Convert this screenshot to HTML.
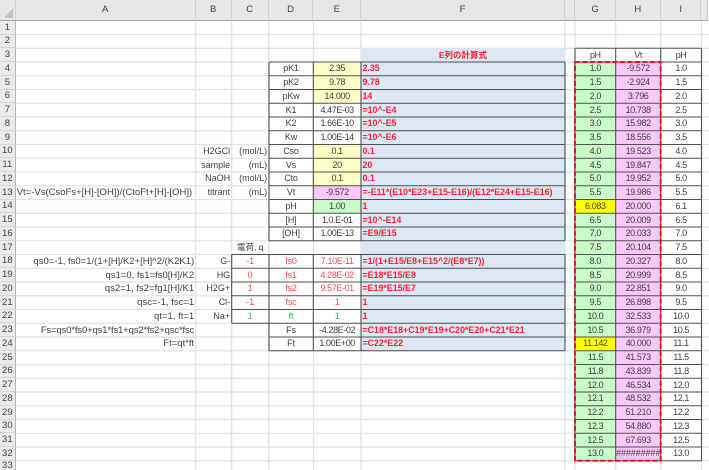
<!DOCTYPE html>
<html><head><meta charset="utf-8">
<style>
html,body{margin:0;padding:0;background:#fff;}
#w{position:relative;width:709px;height:470px;overflow:hidden;background:#fff;filter:blur(.35px);
font-family:"Liberation Sans","Noto Sans CJK JP",sans-serif;font-size:9.5px;color:#3e3e3e;}
#grid{position:absolute;left:0;top:0;display:grid;
grid-template-columns:15.7px 180px 36px 37px 44.6px 47.7px 204px 10px 40.7px 45px 40.8px 7px;
grid-template-rows:20.75px repeat(32,13.75px) 10px;width:709px;height:470px;}
#grid>u{display:contents;text-decoration:none}
#grid>u>*{grid-row:var(--r);box-sizing:border-box;display:flex;align-items:center;justify-content:center;white-space:nowrap;line-height:13px;min-width:0;}
.bg{position:absolute;}
.h{background:#e6e6e6;color:#444;font-size:9.5px;grid-row:1!important;border-right:1px solid #cfcfcf;border-bottom:1px solid #a8a8a8;}
.n{grid-column:1;background:#ebebeb;color:#444;border-right:1px solid #b5b5b5;border-bottom:1px solid #d6d6d6;font-size:9.5px;}
.A{grid-column:2}.B{grid-column:3;font-size:9px}.C{grid-column:4;font-size:9px}.D{grid-column:5;font-size:9px;letter-spacing:-.2px}.E{grid-column:6;font-size:9px;letter-spacing:-.4px}.F{grid-column:7}.G{grid-column:9;font-size:9px;letter-spacing:-.4px}.H{grid-column:10;font-size:9px;letter-spacing:-.4px}.I{grid-column:11;font-size:9px;letter-spacing:-.4px}
.r{justify-content:flex-end!important;padding-right:1.5px;overflow:visible}
.l{justify-content:flex-start!important;padding-left:1px;}
.b{background:#fff}
.y{background:#ffffc8}.p{background:#fdc8fd}.g{background:#c8fcc8}.Y{background:#ff0;color:#444}
.f{background:#dce9f5;color:#ff2030;font-weight:bold;font-size:8.85px;justify-content:flex-start!important;padding-left:1.5px;overflow:hidden}
.R{color:#ff4a50}.T{color:#30b860}
.gh{background:#c8fcc8}
s{text-decoration:none}i{font-style:normal}
</style></head><body>
<div id="w">
<svg class="bg" style="left:0;top:0" width="709" height="470" stroke="#e0e0e0" stroke-width="1.2">
<path d="M16 34.5H709M16 48.3H709M16 62H709M16 75.8H709M16 89.5H709M16 103.3H709M16 117H709M16 130.8H709M16 144.5H709M16 158.3H709M16 172H709M16 185.8H709M16 199.5H709M16 213.3H709M16 227H709M16 240.8H709M16 254.5H709M16 268.3H709M16 282H709M16 295.8H709M16 309.5H709M16 323.3H709M16 337H709M16 350.8H709M16 364.5H709M16 378.3H709M16 392H709M16 405.8H709M16 419.5H709M16 433.3H709M16 447H709M16 460.8H709"/>
<path d="M195.7 21V470M231.7 21V470M268.7 21V470M313.3 21V470M361 21V470M565 21V470M575 21V470M615.7 21V470M660.7 21V470M701.5 21V470"/>
</svg>
<div id="grid">
<u style="--r:1"><i class="h" style="grid-column:1"></i><i class="h A">A</i><i class="h B" style="font-size:9.5px">B</i><i class="h C" style="font-size:9.5px">C</i><i class="h D" style="font-size:9.5px">D</i><i class="h E" style="font-size:9.5px">E</i><i class="h F">F</i><i class="h" style="grid-column:8"></i><i class="h G" style="font-size:9.5px">G</i><i class="h H" style="font-size:9.5px">H</i><i class="h I" style="font-size:9.5px">I</i><i class="h" style="grid-column:12"></i></u>
<u style="--r:2"><s class="n">1</s></u>
<u style="--r:3"><s class="n">2</s></u>
<u style="--r:4"><s class="n">3</s><b class="F" style="background:#dce9f5;color:#ff2030;font-size:8.5px">E列の計算式</b><div class="G b">pH</div><div class="H b">Vt</div><div class="I b">pH</div></u>
<u style="--r:5"><s class="n">4</s><div class="D b">pK1</div><div class="E b y">2.35</div><div class="F f">2.35</div><div class="G gh">1.0</div><div class="H b p">-9.572</div><div class="I b">1.0</div></u>
<u style="--r:6"><s class="n">5</s><div class="D b">pK2</div><div class="E b y">9.78</div><div class="F f">9.78</div><div class="G gh">1.5</div><div class="H b p">-2.924</div><div class="I b">1.5</div></u>
<u style="--r:7"><s class="n">6</s><div class="D b">pKw</div><div class="E b y">14.000</div><div class="F f">14</div><div class="G gh">2.0</div><div class="H b p">3.796</div><div class="I b">2.0</div></u>
<u style="--r:8"><s class="n">7</s><div class="D b">K1</div><div class="E b">4.47E-03</div><div class="F f">=10^-E4</div><div class="G gh">2.5</div><div class="H b p">10.738</div><div class="I b">2.5</div></u>
<u style="--r:9"><s class="n">8</s><div class="D b">K2</div><div class="E b">1.66E-10</div><div class="F f">=10^-E5</div><div class="G gh">3.0</div><div class="H b p">15.982</div><div class="I b">3.0</div></u>
<u style="--r:10"><s class="n">9</s><div class="D b">Kw</div><div class="E b">1.00E-14</div><div class="F f">=10^-E6</div><div class="G gh">3.5</div><div class="H b p">18.556</div><div class="I b">3.5</div></u>
<u style="--r:11"><s class="n">10</s><div class="B r">H2GCl</div><div class="C r">(mol/L)</div><div class="D b">Cso</div><div class="E b y">0.1</div><div class="F f">0.1</div><div class="G gh">4.0</div><div class="H b p">19.523</div><div class="I b">4.0</div></u>
<u style="--r:12"><s class="n">11</s><div class="B r">sample</div><div class="C r">(mL)</div><div class="D b">Vs</div><div class="E b y">20</div><div class="F f">20</div><div class="G gh">4.5</div><div class="H b p">19.847</div><div class="I b">4.5</div></u>
<u style="--r:13"><s class="n">12</s><div class="B r">NaOH</div><div class="C r">(mol/L)</div><div class="D b">Cto</div><div class="E b y">0.1</div><div class="F f">0.1</div><div class="G gh">5.0</div><div class="H b p">19.952</div><div class="I b">5.0</div></u>
<u style="--r:14"><s class="n">13</s><div class="A l">Vt=-Vs(CsoFs+[H]-[OH])/(CtoFt+[H]-[OH])</div><div class="B r">titrant</div><div class="C r">(mL)</div><div class="D b">Vt</div><div class="E b p">-9.572</div><div class="F f">=-E11*(E10*E23+E15-E16)/(E12*E24+E15-E16)</div><div class="G gh">5.5</div><div class="H b p">19.986</div><div class="I b">5.5</div></u>
<u style="--r:15"><s class="n">14</s><div class="D b">pH</div><div class="E b g">1.00</div><div class="F f">1</div><div class="G b Y">6.083</div><div class="H b p">20.000</div><div class="I b">6.1</div></u>
<u style="--r:16"><s class="n">15</s><div class="D b">[H]</div><div class="E b">1.0.E-01</div><div class="F f">=10^-E14</div><div class="G gh">6.5</div><div class="H b p">20.009</div><div class="I b">6.5</div></u>
<u style="--r:17"><s class="n">16</s><div class="D b">[OH]</div><div class="E b">1.00E-13</div><div class="F f">=E9/E15</div><div class="G gh">7.0</div><div class="H b p">20.033</div><div class="I b">7.0</div></u>
<u style="--r:18"><s class="n">17</s><div class="C" style="font-size:8.5px">電荷, q</div><div class="F" style="background:#dce9f5"></div><div class="G gh">7.5</div><div class="H b p">20.104</div><div class="I b">7.5</div></u>
<u style="--r:19"><s class="n">18</s><div class="A r">qs0=-1, fs0=1/(1+[H]/K2+[H]^2/(K2K1)</div><div class="B r">G-</div><div class="C b R">-1</div><div class="D b R">fs0</div><div class="E b R">7.10E-11</div><div class="F f">=1/(1+E15/E8+E15^2/(E8*E7))</div><div class="G gh">8.0</div><div class="H b p">20.327</div><div class="I b">8.0</div></u>
<u style="--r:20"><s class="n">19</s><div class="A r">qs1=0, fs1=fs0[H]/K2</div><div class="B r">HG</div><div class="C b R">0</div><div class="D b R">fs1</div><div class="E b R">4.28E-02</div><div class="F f">=E18*E15/E8</div><div class="G gh">8.5</div><div class="H b p">20.999</div><div class="I b">8.5</div></u>
<u style="--r:21"><s class="n">20</s><div class="A r">qs2=1, fs2=fg1[H]/K1</div><div class="B r">H2G+</div><div class="C b R">1</div><div class="D b R">fs2</div><div class="E b R">9.57E-01</div><div class="F f">=E19*E15/E7</div><div class="G gh">9.0</div><div class="H b p">22.851</div><div class="I b">9.0</div></u>
<u style="--r:22"><s class="n">21</s><div class="A r">qsc=-1, fsc=1</div><div class="B r">Cl-</div><div class="C b R">-1</div><div class="D b R">fsc</div><div class="E b R">1</div><div class="F f">1</div><div class="G gh">9.5</div><div class="H b p">26.898</div><div class="I b">9.5</div></u>
<u style="--r:23"><s class="n">22</s><div class="A r">qt=1, ft=1</div><div class="B r">Na+</div><div class="C b T">1</div><div class="D b T">ft</div><div class="E b T">1</div><div class="F f">1</div><div class="G gh">10.0</div><div class="H b p">32.533</div><div class="I b">10.0</div></u>
<u style="--r:24"><s class="n">23</s><div class="A r" style="letter-spacing:-.15px">Fs=qs0*fs0+qs1*fs1+qs2*fs2+qsc*fsc</div><div class="D b">Fs</div><div class="E b">-4.28E-02</div><div class="F f">=C18*E18+C19*E19+C20*E20+C21*E21</div><div class="G gh">10.5</div><div class="H b p">36.979</div><div class="I b">10.5</div></u>
<u style="--r:25"><s class="n">24</s><div class="A r">Ft=qt*ft</div><div class="D b">Ft</div><div class="E b">1.00E+00</div><div class="F f">=C22*E22</div><div class="G b Y">11.142</div><div class="H b p">40.000</div><div class="I b">11.1</div></u>
<u style="--r:26"><s class="n">25</s><div class="G gh">11.5</div><div class="H b p">41.573</div><div class="I b">11.5</div></u>
<u style="--r:27"><s class="n">26</s><div class="G gh">11.8</div><div class="H b p">43.839</div><div class="I b">11.8</div></u>
<u style="--r:28"><s class="n">27</s><div class="G gh">12.0</div><div class="H b p">46.534</div><div class="I b">12.0</div></u>
<u style="--r:29"><s class="n">28</s><div class="G gh">12.1</div><div class="H b p">48.532</div><div class="I b">12.1</div></u>
<u style="--r:30"><s class="n">29</s><div class="G gh">12.2</div><div class="H b p">51.210</div><div class="I b">12.2</div></u>
<u style="--r:31"><s class="n">30</s><div class="G gh">12.3</div><div class="H b p">54.880</div><div class="I b">12.3</div></u>
<u style="--r:32"><s class="n">31</s><div class="G gh">12.5</div><div class="H b p">67.693</div><div class="I b">12.5</div></u>
<u style="--r:33"><s class="n">32</s><div class="G gh">13.0</div><div class="H b p" style="letter-spacing:-.1px">#########</div><div class="I b">13.0</div></u>
<u style="--r:34"><s class="n">33</s></u>
</div>
<svg class="bg" style="left:0;top:0" width="709" height="470">
<polygon points="13,8 13,18 4,18" fill="#c4c4c4"/>
<g fill="none" stroke="#505050" stroke-width="1.1">
<path d="M269 62H565M269 75.75H565M269 89.5H565M269 103.25H565M269 117H565M269 130.75H565M269 144.5H565M269 158.25H565M269 172H565M269 185.75H565M269 199.5H565M269 213.25H565M269 227H565M269 240.75H565"/>
<path d="M231.7 254.5H565M231.7 268.25H565M231.7 282H565M231.7 295.75H565M231.7 309.5H565M231.7 323.25H565M269 337H565M269 350.75H565"/>
<path d="M269 62V240.75M313.3 62V240.75M361 62V240.75M565 62V240.75M231.7 254.5V323.25M269 254.5V350.75M313.3 254.5V350.75M361 254.5V350.75M565 254.5V350.75"/>
<path d="M575 48.25H701.5M575 75.75H701.5M575 89.5H701.5M575 103.25H701.5M575 117H701.5M575 130.75H701.5M575 144.5H701.5M575 158.25H701.5M575 172H701.5M575 185.75H701.5M575 199.5H701.5M575 213.25H701.5M575 227H701.5M575 240.75H701.5M575 254.5H701.5M575 268.25H701.5M575 282H701.5M575 295.75H701.5M575 309.5H701.5M575 323.25H701.5M575 337H701.5M575 350.75H701.5M575 364.5H701.5M575 378.25H701.5M575 392H701.5M575 405.75H701.5M575 419.5H701.5M575 433.25H701.5M575 447H701.5M575 62H701.5M575 460.75H701.5"/>
<path d="M575 48.25V460.75M615.7 48.25V460.75M660.7 48.25V460.75M701.5 48.25V460.75"/>
</g>
<rect x="575" y="62" width="85.7" height="398.75" fill="none" stroke="#f01020" stroke-width="2" stroke-dasharray="5 2.5"/>
</svg>
</div>
</body></html>
